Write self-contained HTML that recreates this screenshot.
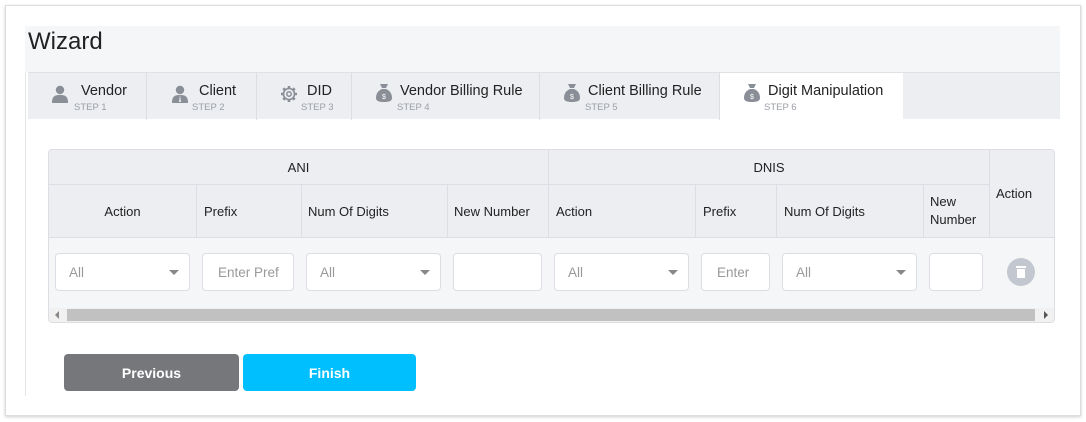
<!DOCTYPE html>
<html><head><meta charset="utf-8"><style>
*{box-sizing:border-box;margin:0;padding:0}
body{width:1086px;height:422px;background:#fff;font-family:"Liberation Sans",sans-serif;position:relative;overflow:hidden;color:#222}
.a{position:absolute}
.card{left:5px;top:5px;width:1076px;height:411px;border:1px solid #ddd;box-shadow:0 1px 3px rgba(0,0,0,.2);background:#fff}
.inner{left:25px;top:26px;width:1035px;height:370px;border-left:1px solid #e5e6ea}
.hdr{left:25px;top:26px;width:1035px;height:46px;background:#f5f6f8}
.title{left:28px;top:28px;font-size:24px;color:#222}
.tabs{left:28px;top:72px;width:1032px;height:47px;background:#eceef2;border-top:1px solid #dfe1e5}
.tab{position:absolute;top:0;height:47px;border-right:1px solid #dcdee2}
.tab .t{position:absolute;top:10px;font-size:14.5px;color:#222;white-space:nowrap}
.tab .s{position:absolute;top:29px;font-size:9.5px;color:#9a9ea5;white-space:nowrap}
.tab svg{position:absolute;top:12px}
.tbl{left:48px;top:149px;width:1007px;height:174px;border:1px solid #dcdee3;border-radius:4px;background:#f5f6f8;overflow:hidden}
.c{position:absolute;font-size:13px;color:#222;display:flex;align-items:center;justify-content:center;border-right:1px solid #dcdee3;border-bottom:1px solid #dcdee3;background:#eceef2}
.in{position:absolute;top:253px;height:38px;background:#fff;border:1px solid #dcdee3;border-radius:4px;font-size:13.5px;color:#999;padding-left:13px;line-height:37px;overflow:hidden;white-space:nowrap}
.in .ar{position:absolute;right:10px;top:16px;width:0;height:0;border-left:5px solid transparent;border-right:5px solid transparent;border-top:5px solid #888}
.btn{position:absolute;top:354px;height:37px;border-radius:4px;color:#fff;font-size:14px;font-weight:bold;display:flex;align-items:center;justify-content:center}
</style></head><body>
<div class="a card"></div>
<div class="a inner"></div>
<div class="a hdr"></div>
<div class="a title">Wizard</div>
<div class="a tabs">
 <div class="tab" style="left:0;width:119px">
  <svg style="left:24px" width="16" height="18" viewBox="0 0 16 18"><circle cx="8" cy="5" r="4.2" fill="#8a8e96"/><path d="M0 18 C0 11 3 10 8 10 C13 10 16 11 16 18Z" fill="#8a8e96"/></svg>
  <span class="t" style="left:53px">Vendor</span><span class="s" style="left:46px">STEP 1</span></div>
 <div class="tab" style="left:119px;width:110px">
  <svg style="left:25px" width="16" height="18" viewBox="0 0 16 18"><circle cx="8" cy="5" r="4.2" fill="#8a8e96"/><path d="M0 18 C0 11 3 10 8 10 C13 10 16 11 16 18Z" fill="#8a8e96"/><path d="M8 10 L7 17 L9 17Z" fill="#eceef2"/></svg>
  <span class="t" style="left:52px">Client</span><span class="s" style="left:45px">STEP 2</span></div>
 <div class="tab" style="left:229px;width:95px">
  <svg style="left:23px" width="18" height="18" viewBox="0 0 18 18"><circle cx="9" cy="9" r="5.5" fill="none" stroke="#8a8e96" stroke-width="1.6"/><circle cx="9" cy="9" r="2.2" fill="none" stroke="#8a8e96" stroke-width="1.5"/><g stroke="#8a8e96" stroke-width="2.6"><path d="M9 1v3M9 14v3M1 9h3M14 9h3M3.3 3.3l2.1 2.1M12.6 12.6l2.1 2.1M3.3 14.7l2.1-2.1M12.6 5.4l2.1-2.1"/></g></svg>
  <span class="t" style="left:50px">DID</span><span class="s" style="left:44px">STEP 3</span></div>
 <div class="tab" style="left:324px;width:188px">
  <svg style="left:23px;top:10px" width="18" height="20" viewBox="0 0 18 20"><path d="M5 1 L13 1 L11 5 L7 5Z" fill="#8a8e96"/><path d="M7 6 C2 8 1 12 1 15 C1 18 4 19 9 19 C14 19 17 18 17 15 C17 12 16 8 11 6Z" fill="#8a8e96"/><text x="9" y="16" font-size="7" fill="#fff" text-anchor="middle" font-family="Liberation Sans">$</text></svg>
  <span class="t" style="left:48px">Vendor Billing Rule</span><span class="s" style="left:45px">STEP 4</span></div>
 <div class="tab" style="left:512px;width:180px">
  <svg style="left:23px;top:10px" width="18" height="20" viewBox="0 0 18 20"><path d="M5 1 L13 1 L11 5 L7 5Z" fill="#8a8e96"/><path d="M7 6 C2 8 1 12 1 15 C1 18 4 19 9 19 C14 19 17 18 17 15 C17 12 16 8 11 6Z" fill="#8a8e96"/><text x="9" y="16" font-size="7" fill="#fff" text-anchor="middle" font-family="Liberation Sans">$</text></svg>
  <span class="t" style="left:48px">Client Billing Rule</span><span class="s" style="left:45px">STEP 5</span></div>
 <div class="tab" style="left:692px;width:183px;background:#fff;border-right:none">
  <svg style="left:23px;top:10px" width="18" height="20" viewBox="0 0 18 20"><path d="M5 1 L13 1 L11 5 L7 5Z" fill="#8a8e96"/><path d="M7 6 C2 8 1 12 1 15 C1 18 4 19 9 19 C14 19 17 18 17 15 C17 12 16 8 11 6Z" fill="#8a8e96"/><text x="9" y="16" font-size="7" fill="#fff" text-anchor="middle" font-family="Liberation Sans">$</text></svg>
  <span class="t" style="left:48px">Digit Manipulation</span><span class="s" style="left:44px">STEP 6</span></div>
</div>
<div class="a tbl">
 <div class="c" style="left:0;top:0;width:500px;height:35px">ANI</div>
 <div class="c" style="left:500px;top:0;width:441px;height:35px">DNIS</div>
 <div class="c" style="left:941px;top:0;width:66px;height:88px;border-right:none;align-items:flex-start;padding-top:36px;padding-left:6px;justify-content:flex-start">Action</div>
 <div class="c" style="left:0;top:35px;width:148px;height:53px">Action</div>
 <div class="c" style="left:148px;top:35px;width:105px;height:53px;justify-content:flex-start;padding-left:7px">Prefix</div>
 <div class="c" style="left:253px;top:35px;width:146px;height:53px;justify-content:flex-start;padding-left:6px">Num Of Digits</div>
 <div class="c" style="left:399px;top:35px;width:101px;height:53px;justify-content:flex-start;padding-left:6px">New Number</div>
 <div class="c" style="left:500px;top:35px;width:147px;height:53px;justify-content:flex-start;padding-left:7px">Action</div>
 <div class="c" style="left:647px;top:35px;width:81px;height:53px;justify-content:flex-start;padding-left:7px">Prefix</div>
 <div class="c" style="left:728px;top:35px;width:147px;height:53px;justify-content:flex-start;padding-left:7px">Num Of Digits</div>
 <div class="c" style="left:875px;top:35px;width:66px;height:53px;justify-content:flex-start;padding-left:6px;line-height:18px">New<br>Number</div>
 <div class="a" style="left:0;top:158px;width:1007px;height:15px;background:#f1f1f1"></div>
 <div class="a" style="left:18px;top:159px;width:968px;height:12px;background:#c1c1c1"></div>
 <div class="a" style="left:6px;top:161px;width:0;height:0;border-top:4px solid transparent;border-bottom:4px solid transparent;border-right:4px solid #888"></div>
 <div class="a" style="left:995px;top:161px;width:0;height:0;border-top:4px solid transparent;border-bottom:4px solid transparent;border-left:4px solid #555"></div>
</div>
<div class="in" style="left:55px;width:135px">All<span class="ar"></span></div>
<div class="in" style="left:202px;width:92px;padding-left:15px">Enter Pref</div>
<div class="in" style="left:306px;width:135px">All<span class="ar"></span></div>
<div class="in" style="left:453px;width:89px"></div>
<div class="in" style="left:554px;width:135px">All<span class="ar"></span></div>
<div class="in" style="left:701px;width:69px;padding-left:15px">Enter</div>
<div class="in" style="left:782px;width:135px">All<span class="ar"></span></div>
<div class="in" style="left:929px;width:54px"></div>
<svg class="a" style="left:1007px;top:258px" width="28" height="28" viewBox="0 0 28 28"><circle cx="14" cy="14" r="14" fill="#c3c7d0"/><rect x="9" y="8" width="10" height="2" fill="#fff"/><rect x="10" y="11" width="8" height="9" fill="#fff"/></svg>
<div class="btn" style="left:64px;width:175px;background:#75777b">Previous</div>
<div class="btn" style="left:243px;width:173px;background:#00bfff">Finish</div>
</body></html>
